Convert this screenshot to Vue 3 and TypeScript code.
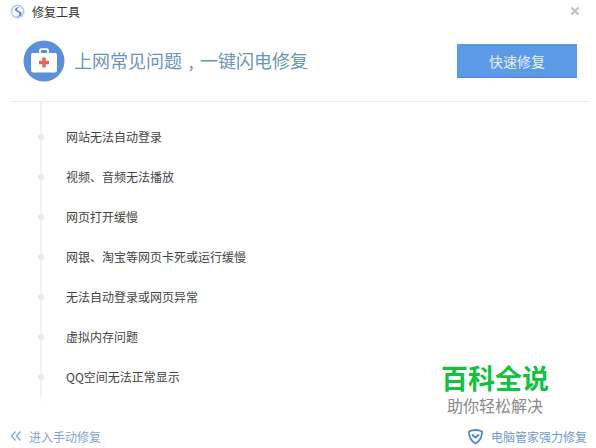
<template>
  <div class="window">
    <div class="titlebar">
      <svg class="logo" width="15" height="15" viewBox="0 0 15 15">
        <circle cx="7.5" cy="7.5" r="7" fill="#b9cdeb" />
        <circle cx="7.5" cy="7.5" r="5.2" fill="#fff" />
        <path d="M10 3.4C7.2 2.6 4.6 4 5 6c.4 1.8 4.4 1.8 4.6 4 .1 1.4-1.6 2.4-3.6 2.2 2.9 1.2 5.6-.2 5.6-2.600 0-2.600-4.400-2.400-4.600-4.200-.1-.9.9-1.700 3-2z" fill="#4f7fc0" />
      </svg>
      <span class="title">修复工具</span>
      <svg class="close" width="10" height="10" viewBox="0 0 10 10">
        <path d="M1.5 1.5l7 7M8.5 1.5l-7 7" stroke="#c2c2c2" stroke-width="2.2" fill="none" />
      </svg>
    </div>

    <div class="header">
      <div class="headline">
        <svg class="kit" width="42" height="42" viewBox="0 0 42 42">
          <circle cx="21" cy="21" r="20.5" fill="#5b8fd9" />
          <path d="M17 13v-2.400c0-.9.6-1.400 1.400-1.400h5.200c.8 0 1.400.5 1.400 1.400V13" fill="none" stroke="#fff" stroke-width="1.800" />
          <rect x="8" y="13" width="26" height="19.500" rx="2" fill="#fff" />
          <path d="M19.300 17.500h3.400v3.300H26v3.400h-3.300v3.300h-3.400v-3.300H16v-3.400h3.300z" fill="#e8625c" />
        </svg>
        <span class="slogan">上网常见问题<span class="comma">,</span>一键闪电修复</span>
      </div>
      <button class="fix-btn" type="button">快速修复</button>
    </div>

    <div class="list-wrap">
      <ul class="issues">
        <li v-for="item in issues" :key="item" class="issue">
          <span class="dot"></span>
          <span class="issue-text">{{ item }}</span>
        </li>
      </ul>
    </div>

    <div class="watermark">
      <div class="wm-main">百科全说</div>
      <div class="wm-sub">助你轻松解决</div>
    </div>

    <div class="footer">
      <a class="foot-link">
        <svg width="12" height="12" viewBox="0 0 12 12">
          <path d="M5.500 1.500L1.500 6l4 4.500M10.500 1.500L6.500 6l4 4.500" fill="none" stroke="#7fa6d6" stroke-width="1.300" />
        </svg>
        <span class="manual">进入手动修复</span>
      </a>
      <a class="foot-link">
        <svg width="17" height="17" viewBox="0 0 17 17">
          <path d="M2 3.500C4 2.500 6 2 8.500 2s4.500.5 6.500 1.500c.2 4.500-1.500 9-6.500 12C3.500 12.500 1.800 8 2 3.500z" fill="none" stroke="#4d86cf" stroke-width="1.800" />
          <path d="M5 6.500c1.500 1.500 2.500 2.200 3.500 3 1-.8 2-1.500 3.500-3" fill="none" stroke="#4d86cf" stroke-width="1.800" />
        </svg>
        <span class="guard">电脑管家强力修复</span>
      </a>
    </div>
  </div>
</template>

<script setup lang="ts">
const issues: string[] = [
  '网站无法自动登录',
  '视频、音频无法播放',
  '网页打开缓慢',
  '网银、淘宝等网页卡死或运行缓慢',
  '无法自动登录或网页异常',
  '虚拟内存问题',
  'QQ空间无法正常显示'
]
</script>

<style scoped>
.window {
  position: relative;
  display: flex;
  flex-direction: column;
  width: 596px;
  height: 448px;
  background: #fff;
  overflow: hidden;
  font-family: "Noto Sans CJK SC", "Liberation Sans", sans-serif;
  color: #444;
}

.titlebar {
  display: flex;
  align-items: center;
  height: 22px;
  padding: 0 16px 0 10px;
  box-sizing: border-box;
}

.logo {
  margin-right: 7px;
}

.title {
  font-size: 12px;
  color: #333;
}

.close {
  margin-left: auto;
}

.header {
  display: flex;
  align-items: center;
  justify-content: space-between;
  height: 80px;
  margin: 0 6px 0 10px;
  padding: 0 13px 1px 13px;
  box-sizing: border-box;
  border-bottom: 1px solid #ececec;
}

.headline {
  display: flex;
  align-items: center;
}

.slogan {
  margin-left: 9px;
  margin-top: -2px;
  font-size: 18px;
  color: #6a94c0;
}

.comma {
  display: inline-block;
  width: 18px;
  text-align: center;
}

.fix-btn {
  width: 120px;
  height: 34px;
  border: 0;
  border-bottom: 1px solid #4f86cc;
  background: #5d9ae6;
  color: #e6f1fc;
  font: inherit;
  font-size: 14px;
}

.list-wrap {
  position: relative;
  flex: 1;
  margin-left: 40px;
  padding-top: 14px;
  background: linear-gradient(#f2f2f2 0, #f2f2f2 90%, #fff 94%) left top / 2px 100% no-repeat;
  box-sizing: border-box;
}

.issues {
  list-style: none;
  margin: 0;
  padding: 0;
}

.issue {
  display: flex;
  align-items: center;
  height: 40px;
  font-size: 12px;
}

.dot {
  width: 6px;
  height: 6px;
  margin-left: -2px;
  margin-top: 2px;
  border-radius: 50%;
  background: #e8e8e8;
}

.issue-text {
  margin-left: 22px;
}

.watermark {
  position: absolute;
  left: 440px;
  top: 363px;
  width: 110px;
  text-align: center;
  font-family: "Liberation Sans", "Noto Sans CJK SC", sans-serif;
}

.wm-main {
  font-size: 27px;
  line-height: 34px;
  font-weight: 700;
  color: #13c13f;
}

.wm-sub {
  font-size: 16px;
  line-height: 20px;
  color: #8a8a8a;
}

.footer {
  display: flex;
  align-items: center;
  justify-content: space-between;
  height: 24px;
  padding: 0 9px 0 10px;
  font-size: 12px;
}

.foot-link {
  display: flex;
  align-items: center;
  gap: 7px;
}

.manual {
  color: #7fa6d6;
}

.guard {
  color: #6f9bd4;
}
</style>
